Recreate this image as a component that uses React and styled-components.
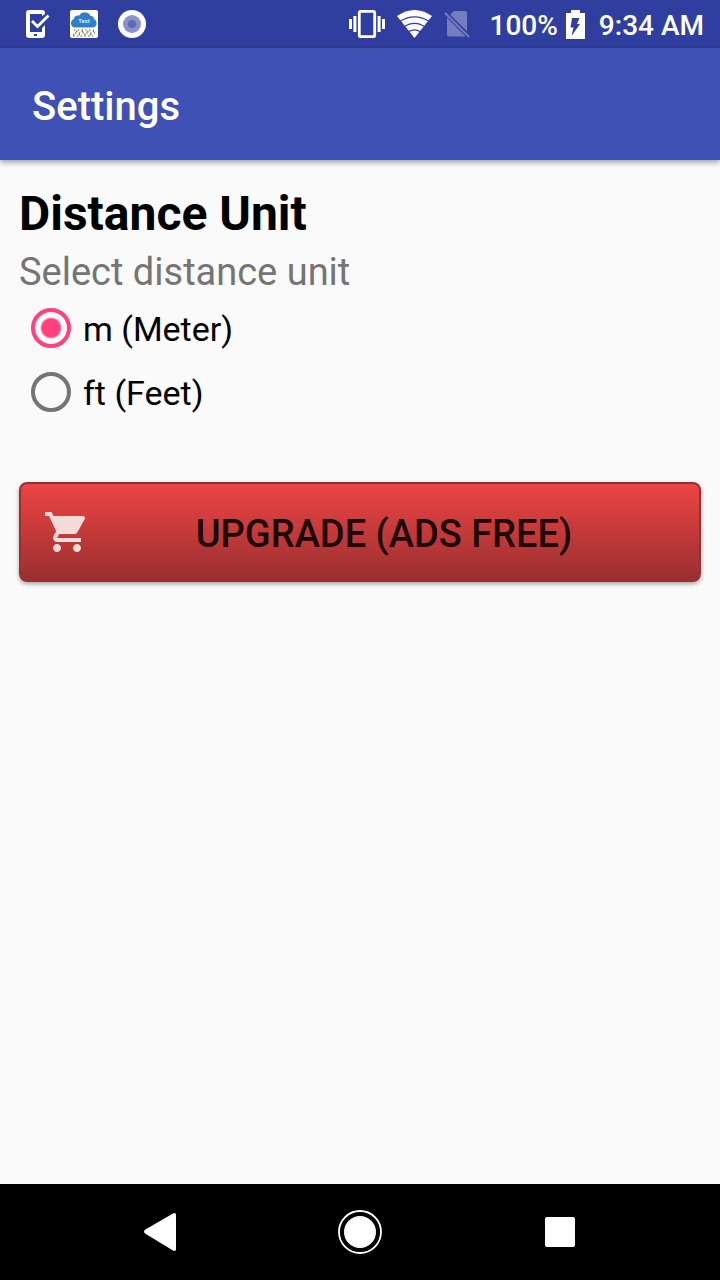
import React, { useState } from 'react';
import styled, { createGlobalStyle } from 'styled-components';


const units = [
  { value: 'm', label: 'm (Meter)' },
  { value: 'ft', label: 'ft (Feet)' },
];

const PhoneCheckIcon = () => (
  <svg width="26" height="28" viewBox="0 0 26 28" fill="none">
    <path
      fillRule="evenodd"
      fill="#fff"
      d="M5 0h13q3 0 3 3v1l-3 2V4H6v18h12v-4l3-3v10q0 3-3 3H5q-3 0-3-3V3q0-3 3-3zM10 24v2h3v-2z"
    />
    <path d="M8 11l5.500 5.500L24.500 5.500" stroke="#fff" strokeWidth="2.800" />
  </svg>
);

const CloudTestIcon = () => (
  <svg width="28" height="28" viewBox="0 0 28 28">
    <rect width="28" height="28" rx="2" fill="#fff" />
    <path
      fill="#2f80c8"
      d="M4 17.500q-3-1-3-4.500 0-3 3-4 0-4 5-3.500 3-4 6.500-3 4 0 5 3.500 3-.5 3.500 3 3 1.500 2.500 5.500-1 3-4 3z"
    />
    <text x="14" y="13" fontFamily="Roboto, sans-serif" fontSize="6" fill="#fff" textAnchor="middle">Test</text>
    <g fill="none" strokeWidth="1.4" strokeDasharray="1.4 2.4">
      <path d="M4 20h20M5 23h20M3 26h20" stroke="#58a55c" />
      <path d="M6 21.5h20M3 24.5h20" stroke="#d94848" strokeDasharray="1.4 4.2" />
    </g>
  </svg>
);

const RingIcon = () => (
  <svg width="28" height="28" viewBox="0 0 28 28">
    <circle cx="14" cy="14" r="14" fill="#fff" />
    <circle cx="14" cy="14" r="9" fill="#8a92cc" />
    <circle cx="14" cy="14" r="4.3" fill="#5f6bb8" />
  </svg>
);

const VibrateIcon = () => (
  <svg width="36" height="28" viewBox="0 0 36 28">
    <rect x="10.3" y="1.3" width="15.4" height="25.4" rx="1.5" fill="none" stroke="#fff" strokeWidth="2.8" />
    <path fill="#fff" d="M0 9h3v10H0zM4.4 6h3v16h-3zM28.6 6h3v16h-3zM33 9h3v10h-3z" />
  </svg>
);

const WifiIcon = () => (
  <svg width="35" height="28" viewBox="0 0 35 28">
    <path fill="#fff" d="M0 6Q17.5-6 35 6L17.5 28z" />
    <path
      d="M2 12Q17.5 1.600 33 12M6 17.500Q17.5 9.200 29 17.500M10 22.800Q17.5 17 25 22.800"
      fill="none"
      stroke="#303f9f"
      strokeWidth="1.2"
    />
  </svg>
);

const NoSimIcon = () => (
  <svg width="26" height="28" viewBox="0 0 26 28">
    <path
      fill="#747dbe"
      d="M10 1h11q2 0 2 2v18.2L6.2 4.8zM3 7.8L21.6 26.4H5q-2 0-2-2z"
    />
    <path d="M1 3l24 24" stroke="#747dbe" strokeWidth="2" />
  </svg>
);

const BatteryIcon = () => (
  <svg width="19" height="29" viewBox="0 0 19 29">
    <path fill="#fff" d="M5 0h9v3h5v26H0V3h5z" />
    <path fill="#303f9f" d="M6 8h7.5l-2.500 6H14L5.500 26l2-8.500H4.5z" />
  </svg>
);

const CartIcon = () => (
  <svg width="48" height="48" viewBox="0 0 24 24" fill="#f5dada">
    <path d="M7 18c-1.1 0-1.99.9-1.99 2S5.9 22 7 22s2-.9 2-2-.9-2-2-2zM1 2v2h2l3.6 7.59-1.35 2.45c-.16.28-.25.61-.25.96 0 1.1.9 2 2 2h12v-2H7.42c-.14 0-.25-.11-.25-.25l.03-.12.9-1.63h7.45c.75 0 1.41-.41 1.75-1.03l3.58-6.49c.08-.14.12-.31.12-.48 0-.55-.45-1-1-1H5.21l-.94-2H1zm16 16c-1.1 0-1.99.9-1.99 2s.89 2 1.99 2 2-.9 2-2-.9-2-2-2z" />
  </svg>
);


const App = () => {
  const [unit, setUnit] = useState('m');

  return (
    <>
      <GlobalStyle />
      <Screen>
        <StatusBar>
          <Notifications>
            <PhoneCheckIcon />
            <CloudTestIcon />
            <RingIcon />
          </Notifications>
          <SystemIcons>
            <VibrateIcon />
            <WifiIcon />
            <NoSimIcon />
          </SystemIcons>
          <Battery>
            <StatusText>100%</StatusText>
            <BatteryIcon />
          </Battery>
          <StatusText>9:34 AM</StatusText>
        </StatusBar>

        <AppBar>
          <Title>Settings</Title>
        </AppBar>

        <Content>
          <Heading id="unit-heading">Distance Unit</Heading>
          <Hint>Select distance unit</Hint>
          <RadioGroup role="radiogroup" aria-labelledby="unit-heading">
            {units.map((item) => (
              <RadioLabel key={item.value}>
                <Radio
                  type="radio"
                  name="unit"
                  value={item.value}
                  checked={unit === item.value}
                  onChange={() => setUnit(item.value)}
                />
                <RadioText>{item.label}</RadioText>
              </RadioLabel>
            ))}
          </RadioGroup>
          <UpgradeButton type="button">
            <CartIcon />
            <ButtonText>Upgrade (Ads Free)</ButtonText>
          </UpgradeButton>
        </Content>

        <NavBar>
          <NavButton type="button" aria-label="Back">
            <svg width="32" height="38" viewBox="0 0 32 38" fill="#fff">
              <path d="M29 .4q3-1.2 3 1.6v34q0 2.8-3 1.6L1 20.4q-2-1.800 0-3.600z" />
            </svg>
          </NavButton>
          <NavButton type="button" aria-label="Home">
            <svg width="44" height="44" viewBox="0 0 44 44">
              <circle cx="22" cy="22" r="21" fill="none" stroke="#fff" strokeWidth="1.8" />
              <circle cx="22" cy="22" r="16" fill="#fff" />
            </svg>
          </NavButton>
          <NavButton type="button" aria-label="Recent apps">
            <svg width="30" height="30" viewBox="0 0 30 30">
              <rect width="30" height="30" rx="2" fill="#fff" />
            </svg>
          </NavButton>
        </NavBar>
      </Screen>
    </>
  );
};


const GlobalStyle = createGlobalStyle`
  * {
    box-sizing: border-box;
  }

  body {
    margin: 0;
    font-family: Roboto, sans-serif;
    background-color: #fafafa;
  }

  svg {
    display: block;
    flex-shrink: 0;
  }
`;

const Screen = styled.div`
  display: flex;
  flex-direction: column;
  min-height: 100vh;
`;

const StatusBar = styled.div`
  display: flex;
  align-items: center;
  gap: 14px;
  height: 48px;
  padding: 0 16px 0 24px;
  background-color: #303f9f;
`;

const Notifications = styled.div`
  display: flex;
  gap: 20px;
  margin-right: auto;
`;

const SystemIcons = styled.div`
  display: flex;
  gap: 12px;
  margin-right: 6px;
`;

const Battery = styled.div`
  display: flex;
  align-items: center;
  gap: 8px;
`;

const StatusText = styled.span`
  color: white;
  font-size: 28px;
  font-weight: 500;
  line-height: 32px;
  padding-top: 4px;
`;

const AppBar = styled.header`
  display: flex;
  align-items: center;
  height: 112px;
  padding: 6px 32px 0;
  background-color: #3f51b5;
  box-shadow: 0 2px 6px rgba(0, 0, 0, 0.4);
`;

const Title = styled.h1`
  margin: 0;
  color: white;
  font-size: 40px;
  font-weight: 500;
  line-height: 48px;
`;

const Content = styled.main`
  display: flex;
  flex-direction: column;
  flex: 1;
  padding: 20px 19px;
`;

const Heading = styled.h2`
  margin: 0;
  color: black;
  font-size: 48px;
  font-weight: 700;
  line-height: 68px;
`;

const Hint = styled.p`
  margin: 0;
  color: #757575;
  font-size: 38px;
  line-height: 48px;
`;

const RadioGroup = styled.div`
  display: flex;
  flex-direction: column;
  margin-bottom: 58px;
`;

const RadioLabel = styled.label`
  display: flex;
  align-items: center;
  gap: 12px;
  height: 64px;
  padding-left: 12px;
  cursor: pointer;
`;

const Radio = styled.input`
  appearance: none;
  width: 40px;
  height: 40px;
  margin: 0;
  border: 4px solid #757575;
  border-radius: 50%;
  cursor: pointer;

  &:checked {
    border-color: #ff4081;
    background: radial-gradient(circle, #ff4081 9px, transparent 11px);
  }
`;

const RadioText = styled.span`
  padding-top: 2px;
  color: black;
  font-size: 34px;
  line-height: 40px;
`;

const UpgradeButton = styled.button`
  display: flex;
  align-items: center;
  height: 100px;
  padding: 0 22px;
  border: 2px solid #992f31;
  border-radius: 8px;
  background: linear-gradient(#ef4444, #992f2f);
  box-shadow: 0 2px 4px rgba(0, 0, 0, 0.35);
  cursor: pointer;
`;

const ButtonText = styled.span`
  flex: 1;
  padding-top: 4px;
  color: #1a0707;
  font-family: Roboto, sans-serif;
  font-size: 38px;
  font-weight: 500;
  line-height: 48px;
  text-align: center;
  text-transform: uppercase;
`;

const NavBar = styled.nav`
  display: flex;
  height: 96px;
  padding: 0 60px;
  background-color: black;
`;

const NavButton = styled.button`
  display: flex;
  flex: 1;
  align-items: center;
  justify-content: center;
  padding: 0;
  border: none;
  background: none;
  cursor: pointer;
`;


export default App;
